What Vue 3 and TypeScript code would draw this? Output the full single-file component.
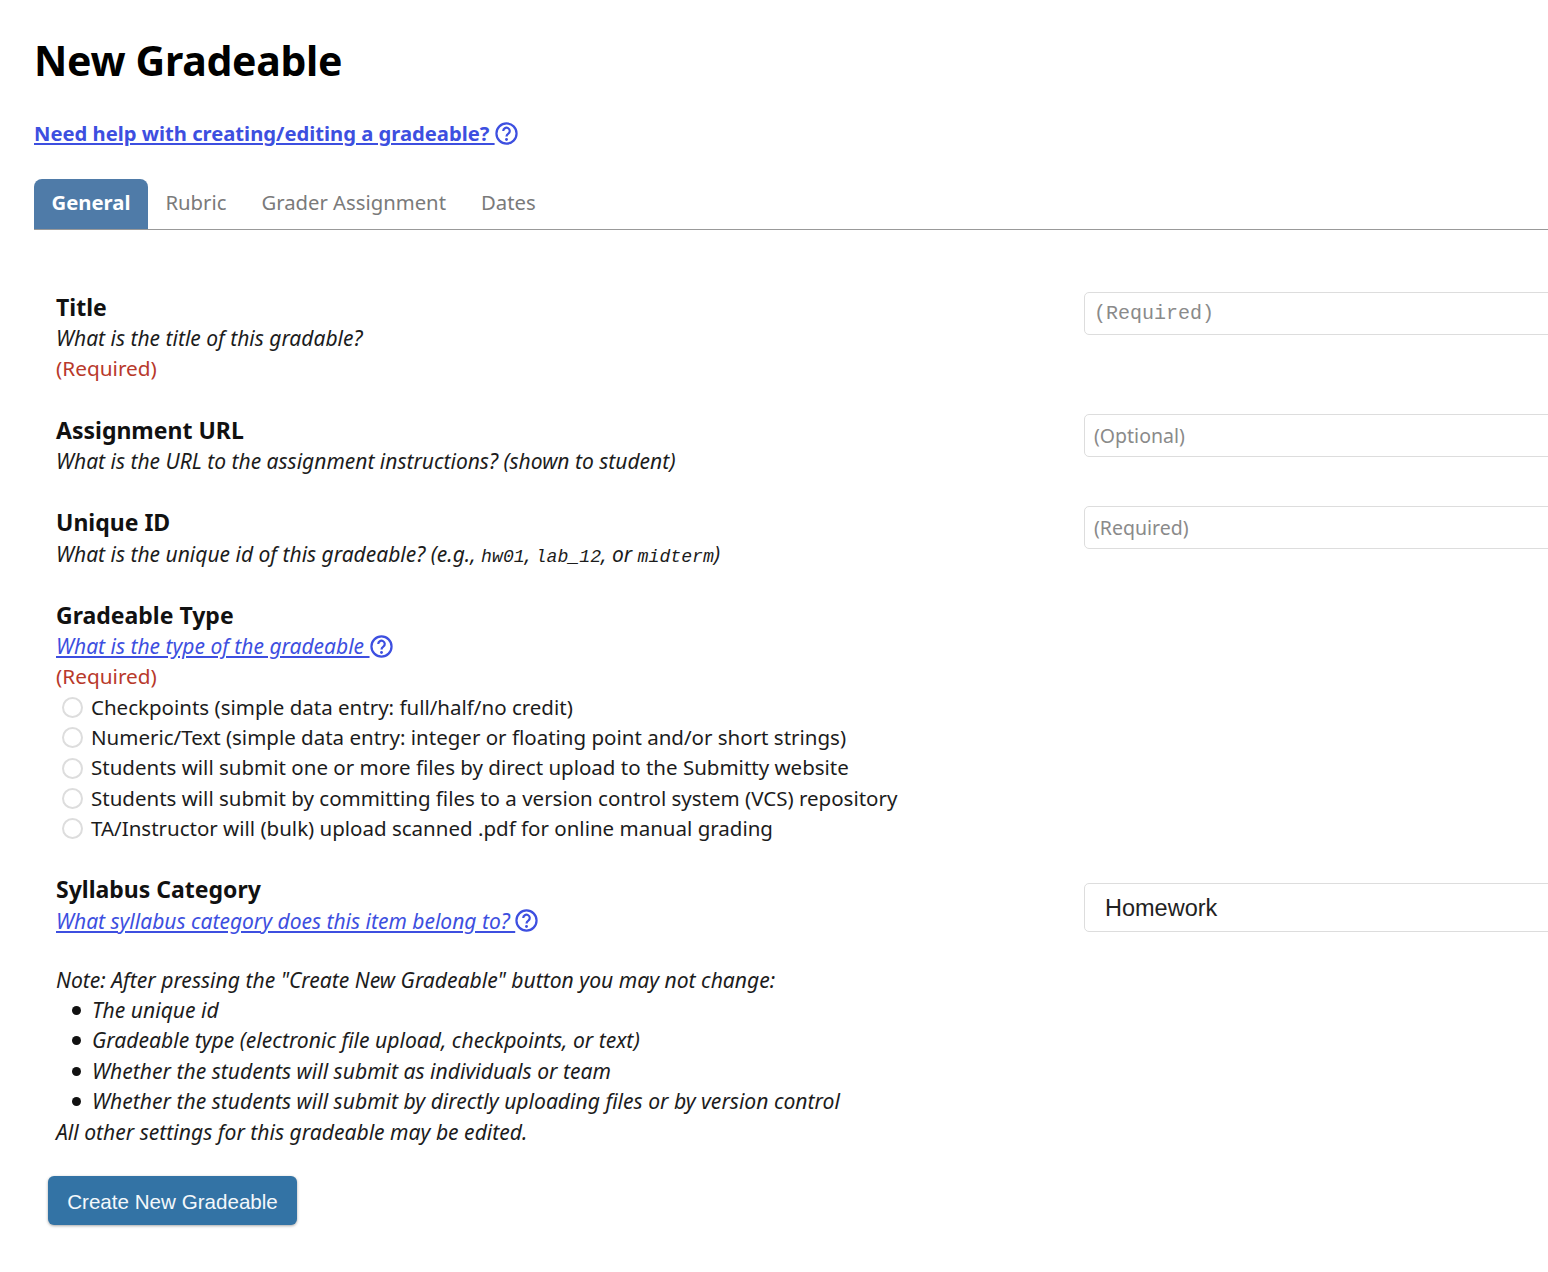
<script setup lang="ts">
interface Field { title: string; help: string; required: boolean; placeholder: string; mono: boolean }
const fields: Field[] = [
  { title: 'Title', help: 'What is the title of this gradable?', required: true, placeholder: '(Required)', mono: true },
  { title: 'Assignment URL', help: 'What is the URL to the assignment instructions? (shown to student)', required: false, placeholder: '(Optional)', mono: false },
]
const types: string[] = [
  'Checkpoints (simple data entry: full/half/no credit)',
  'Numeric/Text (simple data entry: integer or floating point and/or short strings)',
  'Students will submit one or more files by direct upload to the Submitty website',
  'Students will submit by committing files to a version control system (VCS) repository',
  'TA/Instructor will (bulk) upload scanned .pdf for online manual grading',
]
const notes: string[] = [
  'The unique id',
  'Gradeable type (electronic file upload, checkpoints, or text)',
  'Whether the students will submit as individuals or team',
  'Whether the students will submit by directly uploading files or by version control',
]
const tabs: string[] = ['Rubric', 'Grader Assignment', 'Dates']
</script>

<template>
  <div class="page">
    <h1 class="heading">New Gradeable</h1>
    <p class="help-line">
      <a class="help-link" href="#">Need help with creating/editing a gradeable?&nbsp;</a>
      <svg class="q" viewBox="0 0 24 24"><circle cx="12" cy="12" r="10.5" /><path d="M8.6 9.4a3.4 3.4 0 1 1 5.3 2.8c-1.2.8-1.9 1.4-1.9 2.8" /><circle class="dot" cx="12" cy="18.2" r="1.5" /></svg>
    </p>
    <nav class="tabs">
      <span class="tab active">General</span>
      <span v-for="t in tabs" :key="t" class="tab">{{ t }}</span>
    </nav>

    <section v-for="f in fields" :key="f.title" class="row">
      <div class="left">
        <div class="label">{{ f.title }}</div>
        <div class="desc">{{ f.help }}</div>
        <div v-if="f.required" class="req">(Required)</div>
      </div>
      <div class="right">
        <div class="input" :class="{ mono: f.mono }">{{ f.placeholder }}</div>
      </div>
    </section>

    <section class="row">
      <div class="left">
        <div class="label">Unique ID</div>
        <div class="desc">What is the unique id of this gradeable? (e.g., <code>hw01</code>, <code>lab_12</code>, or <code>midterm</code>)</div>
      </div>
      <div class="right"><div class="input raised">(Required)</div></div>
    </section>

    <section class="row">
      <div class="left wide">
        <div class="label">Gradeable Type</div>
        <div class="desc with-icon">
          <a class="link" href="#">What is the type of the gradeable&nbsp;</a>
          <svg class="q" viewBox="0 0 24 24"><circle cx="12" cy="12" r="10.5" /><path d="M8.6 9.4a3.4 3.4 0 1 1 5.3 2.8c-1.2.8-1.9 1.4-1.9 2.8" /><circle class="dot" cx="12" cy="18.2" r="1.5" /></svg>
        </div>
        <div class="req">(Required)</div>
        <div class="radios">
          <label v-for="t in types" :key="t" class="radio"><span class="circle"></span>{{ t }}</label>
        </div>
      </div>
    </section>

    <section class="row syllabus">
      <div class="left">
        <div class="label">Syllabus Category</div>
        <div class="desc with-icon">
          <a class="link" href="#">What syllabus category does this item belong to?&nbsp;</a>
          <svg class="q" viewBox="0 0 24 24"><circle cx="12" cy="12" r="10.5" /><path d="M8.6 9.4a3.4 3.4 0 1 1 5.3 2.8c-1.2.8-1.9 1.4-1.9 2.8" /><circle class="dot" cx="12" cy="18.2" r="1.5" /></svg>
        </div>
      </div>
      <div class="right"><div class="select">Homework</div></div>
    </section>

    <div class="note">
      <div>Note: After pressing the "Create New Gradeable" button you may not change:</div>
      <ul class="note-list">
        <li v-for="n in notes" :key="n">{{ n }}</li>
      </ul>
      <div>All other settings for this gradeable may be edited.</div>
    </div>

    <button class="create" type="button">Create New Gradeable</button>
  </div>
</template>

<style scoped>
.page {
  width: 1548px;
  height: 1272px;
  box-sizing: border-box;
  overflow: hidden;
  padding: 33px 0 0 34px;
  background: #fff;
  font-family: "Noto Sans", "Open Sans", sans-serif;
  font-size: 20.5px;
  line-height: 30.4px;
  color: #1c1c1c;
}
.heading {
  margin: 0;
  font-size: 41px;
  line-height: 54px;
  font-weight: 700;
  color: #000;
  letter-spacing: -0.3px;
}
.help-line {
  margin: 31px 0 0;
  height: 30px;
  display: flex;
  align-items: center;
}
.help-link {
  font-weight: 700;
  font-size: 20.2px;
  color: #3d4fe0;
}
.q {
  width: 23px;
  height: 23px;
  flex: none;
  fill: none;
  stroke: #3d4fe0;
  stroke-width: 2.3;
}
.q .dot { fill: #3d4fe0; stroke: none; }
.tabs {
  margin: 31px 0 0;
  height: 51px;
  box-sizing: border-box;
  display: flex;
  border-bottom: 1px solid #999;
  font-size: 20.3px;
}
.tab {
  padding: 0 17.5px;
  line-height: 47px;
  color: #7a7a7a;
}
.tab.active {
  background: #4f7ba8;
  color: #fff;
  font-weight: 700;
  border-radius: 8px 8px 0 0;
}
.row {
  display: flex;
  padding-left: 22px;
  margin-bottom: 31.7px;
}
.tabs + .row { margin-top: 63px; }
.left { width: 1028px; flex: none; }
.right { width: 600px; flex: none; }
.label { font-weight: 700; color: #111; font-size: 23px; line-height: 28.4px; margin-bottom: 2px; }
.desc { font-style: italic; font-size: 21px; }
.with-icon { display: flex; align-items: center; }
.req { color: #b8392b; font-size: 20.8px; line-height: 28.9px; margin-bottom: 1.5px; }
code {
  font-family: "Liberation Mono", monospace;
  font-size: 18.2px;
  line-height: 0;
}
.link { color: #3d4fe0; }
.input {
  box-sizing: border-box;
  height: 43px;
  border: 1px solid #ddd;
  border-radius: 5px;
  padding: 0 9px;
  line-height: 41px;
  color: #8a8a8a;
  font-size: 19.5px;
  margin-top: -1.6px;
}
.input.mono { font-family: "Liberation Mono", monospace; font-size: 20px; margin-top: -0.6px; }
.input.raised { margin-top: -2.6px; }
.select {
  box-sizing: border-box;
  height: 49px;
  margin-top: 8px;
  border: 1px solid #ddd;
  border-radius: 5px;
  padding: 0 20px;
  line-height: 48px;
  color: #222;
  font-family: "Liberation Sans", Arial, sans-serif;
  font-size: 23.5px;
}
.radios { margin-top: -0.6px; }
.radio { display: flex; align-items: center; height: 30.4px; }
.circle {
  box-sizing: border-box;
  width: 21px;
  height: 21px;
  border: 2px solid #ddd;
  border-radius: 50%;
  margin: 1px 8px 0 6px;
  flex: none;
}
.note { padding-left: 22px; font-style: italic; font-size: 21.1px; margin-top: -3px; }
.note-list { margin: 0; padding: 0 0 0 36px; list-style: none; }
.note-list li { position: relative; }
.note-list li::before {
  content: "";
  position: absolute;
  left: -20.5px;
  top: 11px;
  width: 9px;
  height: 9px;
  border-radius: 50%;
  background: #111;
}
.create {
  display: block;
  margin: 29px 0 0 14px;
  width: 249px;
  height: 49px;
  padding: 3px 0 0;
  border: none;
  border-radius: 6px;
  background: #3373a5;
  box-shadow: 0 1px 3px rgba(0, 0, 0, 0.35);
  color: #f4f8fb;
  font-family: "Liberation Sans", Arial, sans-serif;
  font-size: 20.6px;
}
</style>

<style>
html, body { margin: 0; overflow: hidden; background: #fff; }
</style>
